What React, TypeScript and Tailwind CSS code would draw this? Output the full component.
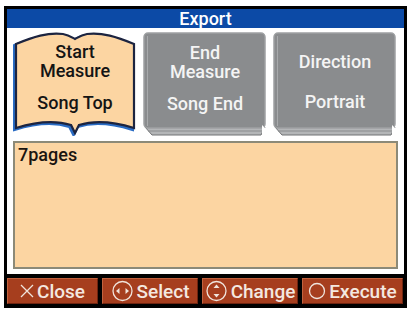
import React from "react";

const FONT = "font-['Roboto','DejaVu_Sans',sans-serif]";

function BookTab({ lines, value }: { lines: string[]; value: string }) {
  const d =
    "M3 12 C20 5 35 0 50 2 C56 3 60 6 62 7 C64 6 68 3 74 2 C89 0 104 5 121 12 L121 96 C105 91 85 87 66 93 L62 101 L58 93 C39 87 19 91 3 96 Z";
  return (
    <div className="relative w-[124px] h-[104px]">
      <svg className="absolute inset-0" width="124" height="104" viewBox="0 0 124 104">
        <path d={d} transform="translate(-1.5 1.5)" fill="none" stroke="#2a6cc4" strokeWidth="3" />
        <path d={d} fill="#fcd5a2" stroke="#1c2440" strokeWidth="2.2" />
      </svg>
      <div className="relative flex flex-col items-center pt-[10px] text-[#141414] font-medium">
        {lines.map((l) => (
          <div key={l} className="text-[18px] leading-[19px]">{l}</div>
        ))}
        <div className="mt-[13px] text-[18px] leading-[19px]">{value}</div>
      </div>
    </div>
  );
}

function PageTab({ lines, value, single }: { lines: string[]; value: string; single?: boolean }) {
  return (
    <div className="relative w-[124px] h-[104px]">
      <svg className="absolute inset-0" width="124" height="104" viewBox="0 0 124 104">
        <path d="M2 95 L122 95 L118 103 L9 103 Z" fill="#b4b6b8" stroke="#707274" strokeWidth="1" />
        <path d="M5 99 L119 99" stroke="#8a8c8e" strokeWidth="1" />
        <rect x="1" y="1" width="121" height="95" rx="4" fill="#8a8c8e" stroke="#9ea0a2" strokeWidth="1.5" />
        <path d="M4.5 4 L4.5 94" stroke="#a8aaac" strokeWidth="1" />
        <path d="M119 93 L124 98 L124 104 L119 104 Z" fill="#ffffff" />
      </svg>
      <div className={`relative flex flex-col items-center text-[#f4f4f4] font-medium ${single ? "pt-[20px]" : "pt-[11px]"}`}>
        {lines.map((l) => (
          <div key={l} className="text-[18px] leading-[19px]">{l}</div>
        ))}
        <div className={`${single ? "mt-[21px]" : "mt-[13px]"} text-[18px] leading-[19px]`}>{value}</div>
      </div>
    </div>
  );
}

function KeyIcon({ kind }: { kind: "close" | "select" | "change" | "exec" }) {
  if (kind === "close")
    return (
      <svg width="14" height="14" viewBox="0 0 14 14" className="shrink-0">
        <path d="M1 1 L13 13 M13 1 L1 13" stroke="#f0e4dc" strokeWidth="1.3" />
      </svg>
    );
  if (kind === "exec")
    return (
      <svg width="18" height="18" viewBox="0 0 18 18" className="shrink-0">
        <circle cx="9" cy="9" r="7.5" fill="none" stroke="#f0e4dc" strokeWidth="1.3" />
      </svg>
    );
  return (
    <svg width="23" height="22" viewBox="0 0 23 22" className="shrink-0">
      <circle cx="11.5" cy="11" r="9.5" fill="none" stroke="#f0e4dc" strokeWidth="1.3" />
      {kind === "select" ? (
        <g fill="#f0e4dc">
          <path d="M5 11 L8.5 8 L8.5 14 Z" />
          <path d="M18 11 L14.5 8 L14.5 14 Z" />
        </g>
      ) : (
        <g fill="#f0e4dc">
          <path d="M11.5 4.5 L8.5 8 L14.5 8 Z" />
          <path d="M11.5 17.5 L8.5 14 L14.5 14 Z" />
        </g>
      )}
    </svg>
  );
}

function Key({ kind, label, w }: { kind: "close" | "select" | "change" | "exec"; label: string; w: string }) {
  return (
    <div className={`${w} h-[26px] flex items-center justify-center gap-[3px] bg-[#a63e1e] border-t border-l border-[#c0623e] border-b border-r border-b-[#6e2410] border-r-[#6e2410]`}>
      <KeyIcon kind={kind} />
      <span className="text-[19px] leading-none font-medium text-[#f4e8e0]">{label}</span>
    </div>
  );
}

export default function App() {
  return (
    <div className={`w-[409px] h-[312px] bg-white pl-[4px] pt-[6px] ${FONT}`}>
      <div className="w-[403px] h-[302px] bg-black p-[3px] flex flex-col">
        <div className="h-[19px] bg-[#0c4aa6] flex items-center justify-center text-[18px] leading-none font-medium text-white">
          Export
        </div>
        <div className="h-[246px] bg-white px-[6px] pt-[4px] pb-[5px] flex flex-col gap-[5px]">
          <div className="flex gap-[6px]">
            <BookTab lines={["Start", "Measure"]} value="Song Top" />
            <PageTab lines={["End", "Measure"]} value="Song End" />
            <PageTab lines={["Direction"]} value="Portrait" single />
          </div>
          <div className="flex-1 bg-[#fcd5a2] border-2 border-[#8c8a78] px-[3px] pt-[2px] text-[18px] leading-[20px] font-medium text-[#1a1410]">
            7pages
          </div>
        </div>
        <div className="flex-1 flex gap-[4px] pt-[4px] pr-[1px]">
          <Key kind="close" label="Close" w="w-[91px]" />
          <Key kind="select" label="Select" w="w-[96px]" />
          <Key kind="change" label="Change" w="w-[96px]" />
          <Key kind="exec" label="Execute" w="flex-1" />
        </div>
      </div>
    </div>
  );
}
